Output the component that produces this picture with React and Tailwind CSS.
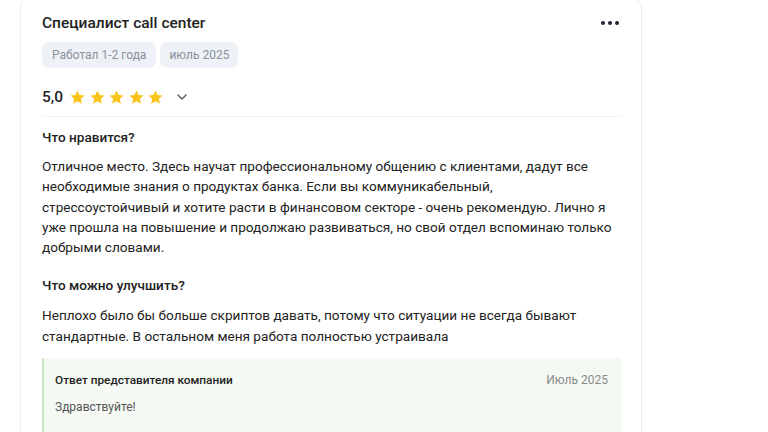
import { ChevronDown } from 'lucide-react';

const Star = () => (
  <svg width="17" height="17" viewBox="0 0 24 24" className="shrink-0">
    <path
      d="M12 2.2l2.95 6.4 7 .75-5.25 4.7 1.5 6.9L12 17.4l-6.2 3.55 1.5-6.9-5.25-4.7 7-.75z"
      fill="#fcc419"
    />
  </svg>
);

const App = () => {
  return (
    <div className="w-[768px] h-[432px] overflow-hidden bg-white pl-5 font-['Roboto',sans-serif] text-[#222]">
      <div className="-mt-1 w-[622px] rounded-xl border border-[#e9ecf0] bg-white pl-[21px] pr-5 pt-[14px] pb-6">
        <div className="flex items-center justify-between">
          <h2 className="text-[15.5px] leading-[24px] font-medium">Специалист call center</h2>
          <div className="mr-[2px] flex gap-[3px]">
            <span className="h-[4px] w-[4px] rounded-full bg-[#1f2333]" />
            <span className="h-[4px] w-[4px] rounded-full bg-[#1f2333]" />
            <span className="h-[4px] w-[4px] rounded-full bg-[#1f2333]" />
          </div>
        </div>

        <div className="mt-[7px] flex gap-1">
          <span className="rounded-lg bg-[#eef1f6] px-[10px] py-[4px] text-[12px] leading-[18px] text-[#8a919c]">
            Работал 1-2 года
          </span>
          <span className="rounded-lg bg-[#eef1f6] px-[9px] py-[4px] text-[12px] leading-[18px] text-[#8a919c]">
            июль 2025
          </span>
        </div>

        <div className="mt-[17px] flex items-center">
          <span className="text-[15.5px] leading-[24px] font-medium">5,0</span>
          <div className="ml-[6px] flex gap-[2.5px]">
            <Star />
            <Star />
            <Star />
            <Star />
            <Star />
          </div>
          <ChevronDown size={16} strokeWidth={2} className="ml-[10px] text-[#555]" />
        </div>

        <div className="mt-[7px] h-px bg-[#f0f2f5]" />

        <h3 className="mt-[10px] text-[13.6px] leading-[20px] font-medium">Что нравится?</h3>
        <p className="mt-[9px] text-[13.6px] leading-[20.25px]">
          Отличное место. Здесь научат профессиональному общению с клиентами, дадут все
          необходимые знания о продуктах банка. Если вы коммуникабельный,
          стрессоустойчивый и хотите расти в финансовом секторе - очень рекомендую. Лично я
          уже прошла на повышение и продолжаю развиваться, но свой отдел вспоминаю только
          добрыми словами.
        </p>

        <h3 className="mt-[18px] text-[13.6px] leading-[20px] font-medium">Что можно улучшить?</h3>
        <p className="mt-[10px] text-[13.6px] leading-[20.25px]">
          Неплохо было бы больше скриптов давать, потому что ситуации не всегда бывают
          стандартные. В остальном меня работа полностью устраивала
        </p>

        <div className="mt-[12px] border-l-2 border-[#c9e8c3] bg-[#f4f9f3] pl-[11px] pr-[13px] pt-[13px] pb-5">
          <div className="flex items-center justify-between">
            <span className="text-[11.8px] leading-[18px] font-medium">Ответ представителя компании</span>
            <span className="text-[12px] leading-[18px] text-[#8a8a8a]">Июль 2025</span>
          </div>
          <p className="mt-[9px] text-[12px] leading-[18px] text-[#555]">Здравствуйте!</p>
        </div>
      </div>
    </div>
  );
};

export default App;
